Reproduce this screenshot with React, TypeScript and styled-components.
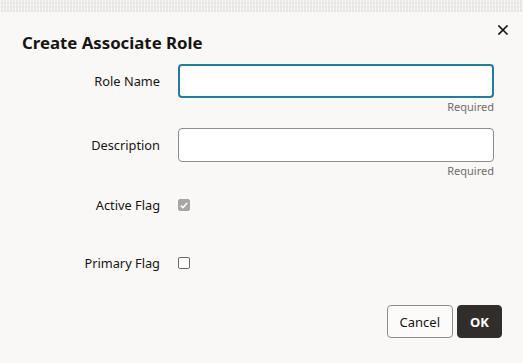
import styled, { createGlobalStyle } from "styled-components";

const GlobalStyle = createGlobalStyle`
  html, body {
    margin: 0;
    padding: 0;
    background: #f9f8f6;
  }
  * {
    box-sizing: border-box;
  }
`;

const App = () => {
  return (
    <>
      <GlobalStyle />
      <Page>
        <Backdrop />
        <Dialog>
          <Header>
            <Title>Create Associate Role</Title>
            <CloseButton aria-label="Close">
              <svg width="10" height="10" viewBox="0 0 10 10">
                <path
                  d="M1 1 L9 9 M9 1 L1 9"
                  stroke="#161513"
                  strokeWidth="1.6"
                  strokeLinecap="square"
                />
              </svg>
            </CloseButton>
          </Header>
          <Form>
            <FieldRow $after={14}>
              <Label>Role Name</Label>
              <FieldCol>
                <TextInput $focused />
                <Helper>Required</Helper>
              </FieldCol>
            </FieldRow>
            <FieldRow $after={10}>
              <Label>Description</Label>
              <FieldCol>
                <TextInput />
                <Helper>Required</Helper>
              </FieldCol>
            </FieldRow>
            <FieldRow $after={24}>
              <Label>Active Flag</Label>
              <CheckCell>
                <CheckBox $checked>
                  <svg width="8" height="7" viewBox="0 0 8 7">
                    <path
                      d="M0.8 3.6 L3 5.6 L7.2 1"
                      stroke="#ffffff"
                      strokeWidth="1.5"
                      fill="none"
                    />
                  </svg>
                </CheckBox>
              </CheckCell>
            </FieldRow>
            <FieldRow $after={0}>
              <Label>Primary Flag</Label>
              <CheckCell>
                <CheckBox />
              </CheckCell>
            </FieldRow>
          </Form>
          <Footer>
            <Button>Cancel</Button>
            <Button $primary>OK</Button>
          </Footer>
        </Dialog>
      </Page>
    </>
  );
};

const Page = styled.div`
  width: 523px;
  height: 363px;
  display: flex;
  flex-direction: column;
  font-family: "Noto Sans", "Open Sans", sans-serif;
  color: #161513;
  overflow: hidden;
`;

// the blurred page behind the dialog
const Backdrop = styled.div`
  height: 12px;
  flex: none;
  background-color: #ebeae8;
  background-image: repeating-linear-gradient(
      90deg,
      rgba(255, 255, 255, 0.6) 0px,
      rgba(255, 255, 255, 0.6) 1px,
      transparent 1px,
      transparent 3px
    ),
    repeating-linear-gradient(
      0deg,
      rgba(0, 0, 0, 0.025) 0px,
      rgba(0, 0, 0, 0.025) 2px,
      transparent 2px,
      transparent 4px
    );
`;

const Dialog = styled.div`
  flex: 1;
  display: flex;
  flex-direction: column;
  background: #f9f8f6;
`;

const Header = styled.div`
  display: flex;
  justify-content: space-between;
  align-items: flex-start;
  padding: 13px 15px 0 22px;
`;

const Title = styled.h1`
  margin: 6px 0 0;
  font-size: 16.8px;
  line-height: 24px;
  font-weight: 700;
  color: #161513;
`;

const CloseButton = styled.button`
  width: 10px;
  height: 10px;
  padding: 0;
  border: none;
  background: none;
  display: flex;
  cursor: pointer;
`;

const Form = styled.div`
  display: flex;
  flex-direction: column;
  padding-left: 22px;
  margin-top: 9px;
`;

const FieldRow = styled.div<{ $after: number }>`
  display: grid;
  grid-template-columns: 138px 316px;
  column-gap: 18px;
  align-items: start;
  margin-bottom: ${({ $after }) => $after}px;
`;

const Label = styled.label`
  height: 34px;
  line-height: 34px;
  text-align: right;
  font-size: 12.8px;
  color: #161513;
`;

const FieldCol = styled.div`
  display: flex;
  flex-direction: column;
`;

const TextInput = styled.div<{ $focused?: boolean }>`
  height: 34px;
  background: #ffffff;
  border-radius: 4px;
  border: ${({ $focused }) =>
    $focused ? "2px solid #227e9e" : "1px solid #8f8d8b"};
`;

const Helper = styled.div`
  margin-top: 2px;
  height: 14px;
  line-height: 14px;
  text-align: right;
  font-size: 11px;
  color: #6f6c69;
`;

const CheckCell = styled.div`
  height: 34px;
  display: flex;
  align-items: center;
`;

const CheckBox = styled.div<{ $checked?: boolean }>`
  width: 12px;
  height: 12px;
  border-radius: 2px;
  display: flex;
  align-items: center;
  justify-content: center;
  background: ${({ $checked }) => ($checked ? "#a8a6a4" : "#ffffff")};
  border: ${({ $checked }) =>
    $checked ? "1px solid #a8a6a4" : "1.5px solid #6a6764"};
`;

const Footer = styled.div`
  display: flex;
  justify-content: flex-end;
  gap: 4px;
  padding: 25px 21px 0 0;
`;

const Button = styled.button<{ $primary?: boolean }>`
  height: 33px;
  padding: 0 12px;
  border-radius: 4px;
  font-family: "Noto Sans", "Open Sans", sans-serif;
  font-size: 13px;
  font-weight: ${({ $primary }) => ($primary ? 700 : 400)};
  min-width: ${({ $primary }) => ($primary ? "45px" : "65px")};
  color: ${({ $primary }) => ($primary ? "#ffffff" : "#161513")};
  background: ${({ $primary }) => ($primary ? "#312d2a" : "#fcfbfa")};
  border: ${({ $primary }) =>
    $primary ? "1px solid #312d2a" : "1px solid #8f8d8b"};
  cursor: pointer;
`;

export default App;
